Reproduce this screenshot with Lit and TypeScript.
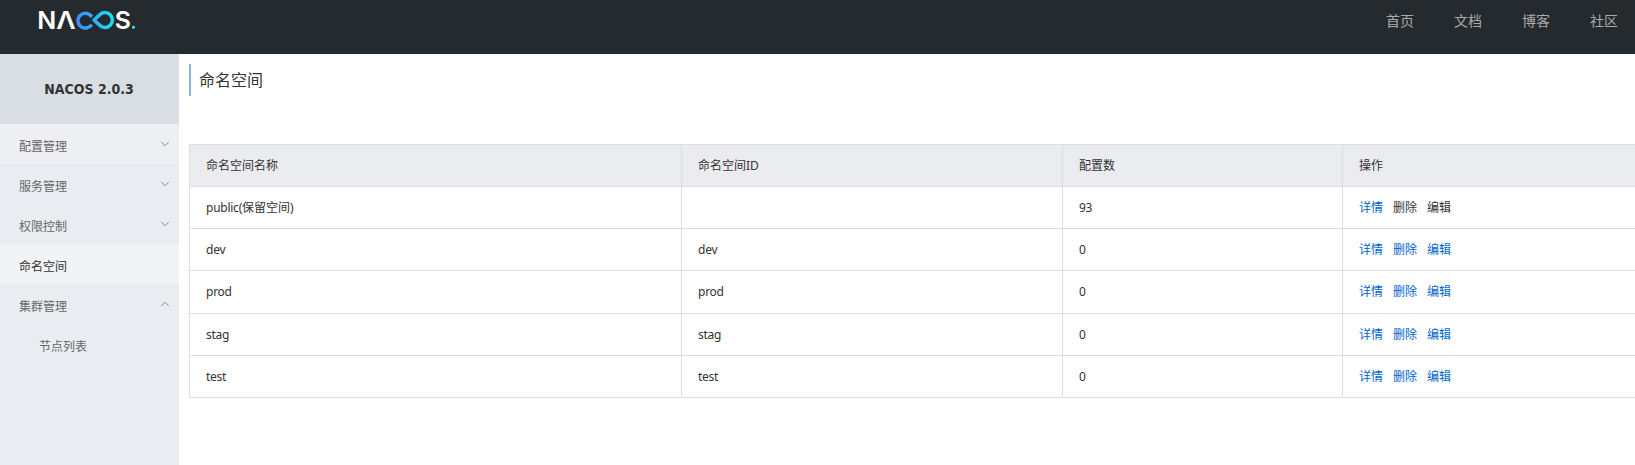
import { LitElement, html, svg, css } from "lit";
import { customElement, property } from "lit/decorators.js";

interface MenuEntry {
  label: string;
  arrow?: "down" | "up";
  state?: "hover" | "active";
  child?: boolean;
}

interface Namespace {
  name: string;
  id: string;
  count: number;
  reserved?: boolean;
}

const MENU: MenuEntry[] = [
  { label: "配置管理", arrow: "down", state: "hover" },
  { label: "服务管理", arrow: "down" },
  { label: "权限控制", arrow: "down" },
  { label: "命名空间", state: "active" },
  { label: "集群管理", arrow: "up" },
  { label: "节点列表", child: true },
];

const NAMESPACES: Namespace[] = [
  { name: "public", id: "", count: 93, reserved: true },
  { name: "dev", id: "dev", count: 0 },
  { name: "prod", id: "prod", count: 0 },
  { name: "stag", id: "stag", count: 0 },
  { name: "test", id: "test", count: 0 },
];

@customElement("nacos-logo")
export class NacosLogo extends LitElement {
  static styles = css`
    :host { display: block; width: 110px; height: 40px; }
    svg { display: block; }
    .letter { font: 600 24px Inter, "Liberation Sans", sans-serif; fill: #fff; }
    .loop { fill: none; stroke-width: 3.5; stroke-linejoin: round; }
  `;
  render() {
    return html`<svg width="110" height="40" viewBox="0 0 110 40">
      <defs>
        <linearGradient id="loop" gradientUnits="userSpaceOnUse" x1="45" y1="0" x2="85" y2="0">
          <stop offset="0" stop-color="#4688ff"></stop>
          <stop offset="0.5" stop-color="#2fb0f8"></stop>
          <stop offset="1" stop-color="#19e4f2"></stop>
        </linearGradient>
      </defs>
      ${svg`
        <text class="letter" x="7.3" y="28.6" textLength="19" lengthAdjust="spacingAndGlyphs">N</text>
        <text class="letter" x="26.2" y="28.6" textLength="19.4" lengthAdjust="spacingAndGlyphs">Λ</text>
        <path class="loop" stroke="url(#loop)" d="M61.6 24.6A7.4 7.4 0 1 1 59.6 14.6L62 16.8"></path>
        <path class="loop" stroke="url(#loop)" d="M64 20L69.9 14.6A7.4 7.4 0 1 1 69.9 25.4Z"></path>
        <text class="letter" x="84.8" y="28.6" textLength="16.2" lengthAdjust="spacingAndGlyphs">S</text>
        <rect x="102" y="25.8" width="3" height="3" rx="1" fill="#19dff2"></rect>
      `}
    </svg>`;
  }
}

@customElement("side-item")
export class SideItem extends LitElement {
  @property({ attribute: false }) entry!: MenuEntry;
  static styles = css`
    :host { display: block; }
    .item {
      box-sizing: border-box; height: 40px; padding: 5px 9px 0 19px;
      display: flex; align-items: center; justify-content: space-between;
      font-size: 12px; line-height: 35px; color: #666;
    }
    .label { padding-top: 1px; line-height: 34px; }
    .hover { background: #eeeff3; }
    .active { background: #f1f3f7; color: #333; }
    .child { padding-left: 39px; }
    .arrow { display: block; margin-top: -6px; fill: none; stroke: #85888c; stroke-width: 1; }
  `;
  render() {
    const { label, arrow, state, child } = this.entry;
    return html`<div class="item ${state ?? ""} ${child ? "child" : ""}">
      <span class="label">${label}</span>
      ${arrow
        ? html`<svg class="arrow" width="10" height="6" viewBox="0 0 10 6">
            <path d=${arrow === "down" ? "M1.3 1L5 4.7L8.7 1" : "M1.3 5L5 1.3L8.7 5"}></path>
          </svg>`
        : ""}
    </div>`;
  }
}

@customElement("namespace-table")
export class NamespaceTable extends LitElement {
  @property({ attribute: false }) rows: Namespace[] = [];
  static styles = css`
    :host { display: block; }
    .table {
      display: grid;
      grid-template-columns: 492px 381px 280px 1fr;
      grid-template-rows: repeat(3, 42px) 43px repeat(2, 42px);
      border-top: 1px solid #dcdee3;
      font-size: 12px; line-height: 17px; color: #333;
    }
    .cell {
      display: flex; align-items: flex-start; padding: 12px 0 0 16px;
      border-left: 1px solid #dcdee3; border-bottom: 1px solid #dcdee3;
    }
    .actions { gap: 10px; }
    .latin { letter-spacing: -0.25px; }
    .head { background: #ebecf0; }
    .link { color: #0066cc; }
  `;
  render() {
    return html`<div class="table">
      ${["命名空间名称", "命名空间ID", "配置数", "操作"].map((t) => html`<div class="cell head">${t}</div>`)}
      ${this.rows.map(
        (r) => html`
          <div class="cell"><span class="latin">${r.name}${r.reserved ? "(" : ""}</span>${r.reserved ? html`<span>保留空间)</span>` : ""}</div>
          <div class="cell"><span class="latin">${r.id}</span></div>
          <div class="cell"><span class="latin">${r.count}</span></div>
          <div class="cell actions">
            <span class="link">详情</span>
            <span class=${r.reserved ? "" : "link"}>删除</span>
            <span class=${r.reserved ? "" : "link"}>编辑</span>
          </div>
        `
      )}
    </div>`;
  }
}

@customElement("app-root")
export class AppRoot extends LitElement {
  static styles = css`
    :host {
      display: flex; flex-direction: column; height: 465px; overflow: hidden;
      background: #fff; color: #333;
      font-family: "Noto Sans", "Noto Sans CJK SC", sans-serif;
    }
    .header {
      flex: none; height: 54px; box-sizing: border-box; padding: 0 17px 0 30px;
      display: flex; justify-content: space-between; align-items: flex-start;
      background: #252a2f;
    }
    .nav { display: flex; gap: 40px; padding-top: 8px; font-size: 14px; line-height: 26px; color: #a8aaac; }
    .body { flex: 1; display: flex; min-height: 0; }
    .side { flex: none; width: 179px; background: #e9edf2; }
    .version {
      height: 70px; padding-right: 1px; display: flex; align-items: center; justify-content: center;
      background: #d9dee4; font: bold 14px/70px "DejaVu Sans Condensed", "DejaVu Sans", sans-serif;
      font-stretch: condensed;
    }
    .main { flex: 1; min-width: 0; padding: 10px 0 0 10px; }
    .title {
      height: 32px; line-height: 32px; margin: 0 0 48px; padding-left: 8px;
      border-left: 2px solid #84b5df; font-size: 16px; font-weight: 400;
    }
  `;
  render() {
    return html`
      <header class="header">
        <nacos-logo></nacos-logo>
        <nav class="nav">${["首页", "文档", "博客", "社区"].map((t) => html`<span>${t}</span>`)}</nav>
      </header>
      <div class="body">
        <aside class="side">
          <div class="version">NACOS 2.0.3</div>
          ${MENU.map((entry) => html`<side-item .entry=${entry}></side-item>`)}
        </aside>
        <main class="main">
          <h1 class="title">命名空间</h1>
          <namespace-table .rows=${NAMESPACES}></namespace-table>
        </main>
      </div>
    `;
  }
}
